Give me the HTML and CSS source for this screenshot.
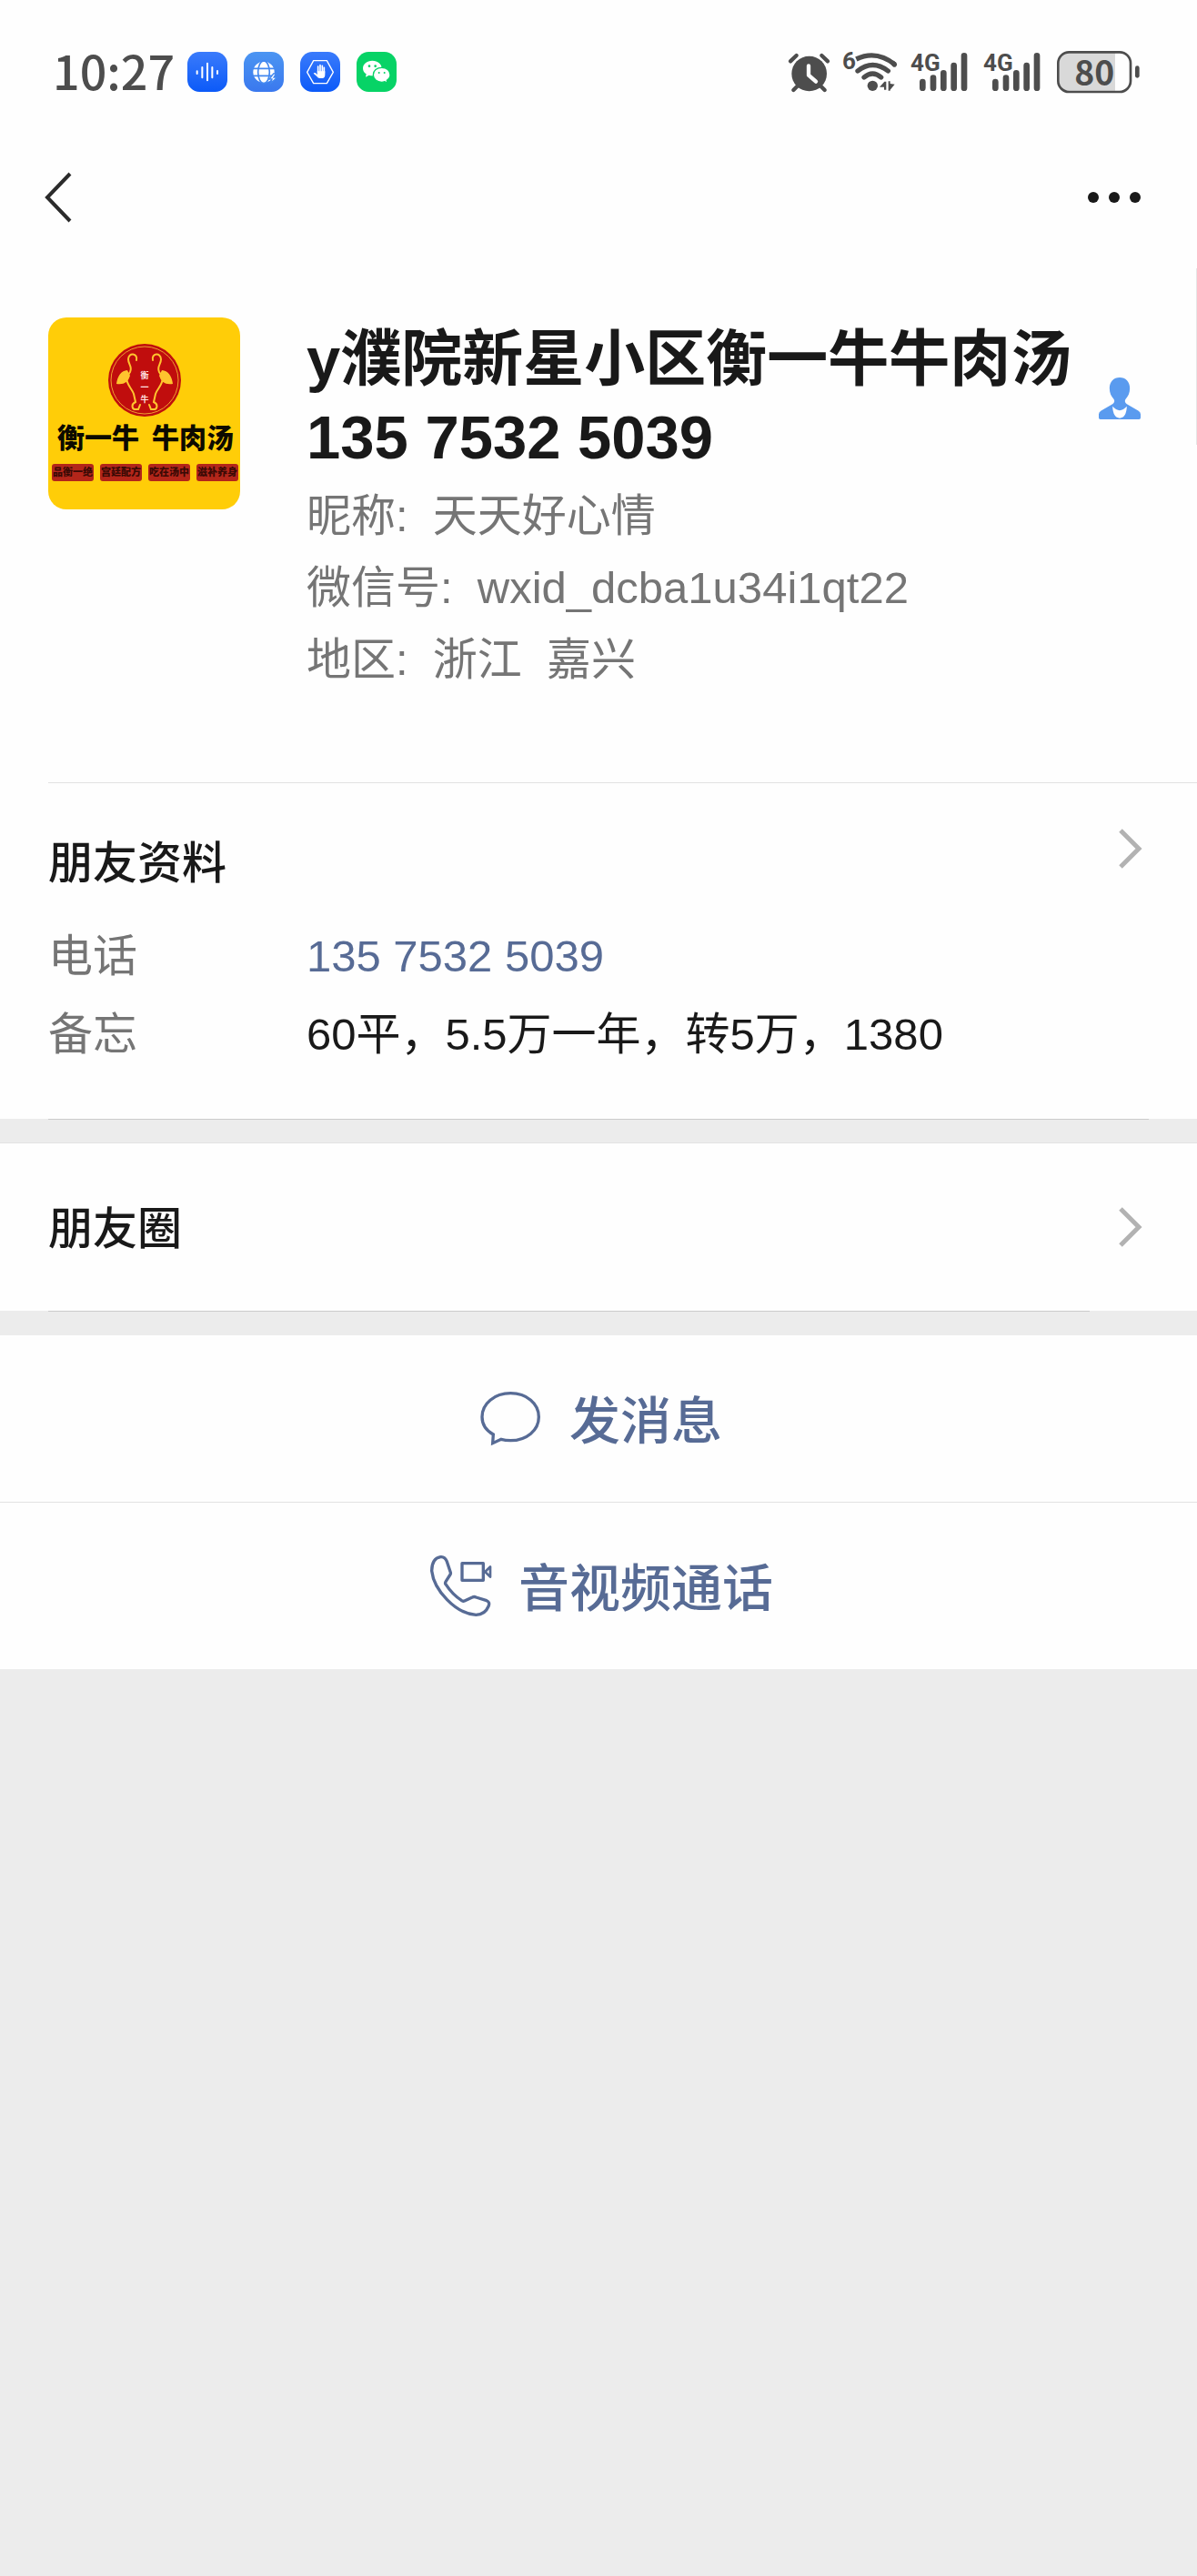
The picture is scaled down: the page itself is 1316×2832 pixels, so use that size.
FILE: index.html
```html
<!DOCTYPE html>
<html lang="zh-CN">
<head>
<meta charset="utf-8">
<meta name="viewport" content="width=device-width, initial-scale=1">
<title>朋友资料</title>
<link rel="stylesheet" href="styles.css">
</head>
<body>
<header class="top">
  <div class="status">
    <time class="clock">10:27</time>
    <div class="apps">
      <svg class="app" viewBox="0 0 132 132" aria-hidden="true">
        <defs><linearGradient id="deep" x1="0" y1="0" x2="0" y2="1"><stop offset="0" stop-color="#3a7bfb"/><stop offset="1" stop-color="#0c5af8"/></linearGradient></defs>
        <rect width="132" height="132" rx="40" fill="url(#deep)"/>
        <path d="M32 64v8M49 51v34M66 38v56M82 51v34M99 63v9" stroke="#fff" stroke-width="6" stroke-linecap="round"/>
      </svg>
      <svg class="app" viewBox="0 0 132 132" aria-hidden="true">
        <defs><linearGradient id="sky" x1="0" y1="0" x2="0" y2="1"><stop offset="0" stop-color="#4b95f2"/><stop offset="1" stop-color="#3a78ee"/></linearGradient></defs>
        <rect width="132" height="132" rx="40" fill="url(#sky)"/>
        <circle cx="66" cy="67" r="35" fill="#fff"/>
        <path d="M30 55h72M30 79h72" stroke="#4287f0" stroke-width="5"/>
        <ellipse cx="66" cy="67" rx="19" ry="37" fill="none" stroke="#4287f0" stroke-width="5"/>
        <path d="M98 72 84 90h9l-3 13 20-19H99l7-12z" fill="#fff" stroke="#4287f0" stroke-width="4"/>
      </svg>
      <svg class="app" viewBox="0 0 132 132" aria-hidden="true">
        <rect width="132" height="132" rx="40" fill="url(#deep)"/>
        <path d="M44 29h44l21 38-21 37H44L23 67z" fill="none" stroke="#fff" stroke-width="4" stroke-linejoin="round"/>
        <path d="M59 70V48M66 68V44M73 68V46M79 70V52" stroke="#fff" stroke-width="5" stroke-linecap="round"/>
        <path d="M56 64h26v12q0 11-9 11h-9q-5 0-9-6L44 71q2-4 7-1l6 5z" fill="#fff"/>
      </svg>
      <svg class="app" viewBox="0 0 132 132" aria-hidden="true">
        <rect width="132" height="132" rx="40" fill="#07d366"/>
        <path d="M52 29c-18 0-31 11-31 25 0 8 4 15 11 19l-2 10 11-6c4 1 8 2 12 2 17 0 30-11 30-25S70 29 52 29z" fill="#fff"/>
        <path d="M83 52c-16 0-28 10-28 24s12 24 28 24c4 0 7-1 10-2l9 5-2-9c7-4 11-11 11-18 0-14-12-24-28-24z" fill="#fff" stroke="#07d366" stroke-width="4"/>
        <g fill="#07d366"><circle cx="42" cy="47" r="4"/><circle cx="62" cy="47" r="4"/><circle cx="74" cy="69" r="3"/><circle cx="92" cy="69" r="3"/></g>
      </svg>
    </div>
    <div class="system">
      <svg width="45" height="48" viewBox="45 42 135 144" aria-label="闹钟">
        <circle cx="119" cy="120" r="58" fill="#4d4d4d"/>
        <path d="M57 79 77 60M180 79 160 60M79 162 67 174M158 162l12 12" stroke="#4d4d4d" stroke-width="13" stroke-linecap="round"/>
        <path d="M117 94v31l24 21" fill="none" stroke="#fff" stroke-width="13" stroke-linecap="round" stroke-linejoin="round"/>
      </svg>
      <svg width="60" height="48" viewBox="228 42 180 144" aria-label="无线网络">
        <text x="228" y="106" class="tag">6</text>
        <g fill="none" stroke="#4d4d4d" stroke-width="16">
          <path d="M274 72Q340 40 402 90" stroke-linecap="butt"/>
          <path d="M396 86l4 4M279 111Q328 72 379 111M300 132Q328 108 356 132" stroke-linecap="round"/>
        </g>
        <circle cx="328" cy="160" r="17" fill="#4d4d4d"/>
        <path d="M351 164l16-18h6v27h-7v-9zM401 155l-15 18v3h-6v-31h6v8z" fill="#4d4d4d"/>
      </svg>
      <svg width="64" height="48" viewBox="456 42 192 144" aria-label="信号">
        <text x="453" y="111" class="tag">4G</text>
        <path d="M493 147v20M528 134v33M562 118v49M596 93v74M630 61v106" stroke="#4d4d4d" stroke-width="20" stroke-linecap="round"/>
      </svg>
      <svg width="64" height="48" viewBox="456 42 192 144" aria-label="信号">
        <text x="453" y="111" class="tag">4G</text>
        <path d="M493 147v20M528 134v33M562 118v49M596 93v74M630 61v106" stroke="#4d4d4d" stroke-width="20" stroke-linecap="round"/>
      </svg>
      <svg width="92" height="48" viewBox="936 42 276 144" aria-label="电量">
        <path d="M974 52h154v124H974q-30 0-30-32V84q0-32 30-32z" fill="#d9d9d9"/>
        <rect x="940" y="49" width="239" height="131" rx="36" fill="none" stroke="#4d4d4d" stroke-width="8"/>
        <path d="M1201 101v26" stroke="#4d4d4d" stroke-width="14" stroke-linecap="round"/>
        <text x="1060" y="158" text-anchor="middle" class="level">80</text>
      </svg>
    </div>
  </div>
  <nav class="nav">
    <button class="icon-button" type="button" aria-label="返回">
      <svg width="30" height="60" viewBox="0 0 30 60"><path d="M29 4 4 30l25 26" fill="none" stroke="#2b2b2b" stroke-width="4"/></svg>
    </button>
    <button class="icon-button" type="button" aria-label="更多">
      <svg width="60" height="14" viewBox="0 0 60 14" fill="#191919"><circle cx="7" cy="7" r="6"/><circle cx="30" cy="7" r="6"/><circle cx="53" cy="7" r="6"/></svg>
    </button>
  </nav>
</header>

<main>
  <section class="profile">
    <svg class="avatar" viewBox="0 0 211 211" role="img" aria-label="衡一牛 牛肉汤">
      <rect width="211" height="211" fill="#ffcd08"/>
      <circle cx="106" cy="69" r="40" fill="#c00d0d"/>
      <circle cx="106" cy="69" r="37" fill="none" stroke="#f0a030" stroke-width="1"/>
      <g fill="none" stroke="#ffc52e" stroke-width="2" stroke-linecap="round">
        <path d="M97 47c2-8-9-9-9-1 0 6 5 8 2 14l-4 6c0 8 6 12 8 18l2 9c-5 2-4 7-1 8h4l2-5"/>
        <path d="M115 47c-2-8 9-9 9-1 0 6-5 8-2 14l4 6c0 8-6 12-8 18l-2 9c5 2 4 7 1 8h-4l-2-5"/>
      </g>
      <path d="M87 58q-10 1-12 15 12 2 15-9zM125 58q10 1 12 15-12 2-15-9z" fill="#ffc52e"/>
      <g class="crest" text-anchor="middle"><text x="106" y="67">衡</text><text x="106" y="80">一</text><text x="106" y="93">牛</text></g>
      <text x="10" y="143" class="sign">衡一牛</text>
      <text x="114" y="143" class="sign">牛肉汤</text>
      <g fill="#b3261a"><rect x="4" y="161" width="46" height="19" rx="3"/><rect x="57" y="161" width="46" height="19" rx="3"/><rect x="110" y="161" width="46" height="19" rx="3"/><rect x="163" y="161" width="46" height="19" rx="3"/></g>
      <g class="slogan" text-anchor="middle"><text x="27" y="174">品衡一绝</text><text x="80" y="174">宫廷配方</text><text x="133" y="174">吃在汤中</text><text x="186" y="174">滋补养身</text></g>
    </svg>
    <div class="identity">
      <div class="name-row">
        <h1 class="name">y濮院新星小区衡一牛牛肉汤 135 7532 5039</h1>
        <svg class="person" width="46" height="46" viewBox="0 0 140 140" aria-hidden="true">
          <path d="M70 0c20 0 34 14 34 36 0 16-6 28-14 36-4 4-3 12 4 17l38 22q8 5 8 12v12q0 5-5 5H5q-5 0-5-5v-12q0-7 8-12l38-22c7-5 8-13 4-17-8-8-14-20-14-36C36 14 50 0 70 0z" fill="#5a9bef"/>
          <path d="M46 97q24 26 48 0-2 39-24 39T46 97z" fill="#fff"/>
        </svg>
      </div>
      <p class="meta">昵称:&nbsp; 天天好心情</p>
      <p class="meta">微信号:&nbsp; wxid_dcba1u34i1qt22</p>
      <p class="meta">地区:&nbsp; 浙江&nbsp; 嘉兴</p>
    </div>
    <span class="edge-handle"></span>
  </section>

  <section class="details">
    <div class="details-head">
      <h2 class="title">朋友资料</h2>
      <button class="icon-button" type="button" aria-label="编辑朋友资料">
        <svg class="chevron" viewBox="0 0 28 44"><path d="m3 2 20 20L3 42" fill="none" stroke="#b2b2b2" stroke-width="5"/></svg>
      </button>
    </div>
    <dl class="fields">
      <dt>电话</dt><dd><a class="phone" href="tel:13575325039">135 7532 5039</a></dd>
      <dt>备忘</dt><dd>60平，5.5万一年，转5万，1380</dd>
    </dl>
  </section>
  <div class="band"></div>

  <button class="moments" type="button">
    <span class="title">朋友圈</span>
    <svg class="chevron" viewBox="0 0 28 44"><path d="m3 2 20 20L3 42" fill="none" stroke="#b2b2b2" stroke-width="5"/></svg>
  </button>
  <div class="band band-short"></div>

  <div class="actions">
    <button class="action" type="button">
      <svg class="action-icon" viewBox="0 0 240 240" aria-hidden="true">
        <path d="M118 35c53 0 93 34 93 78s-40 78-93 78c-11 0-21-1-31-4l-28 13 2-29C38 158 24 137 24 113c0-44 41-78 94-78z" fill="none" stroke="#576b95" stroke-width="10"/>
      </svg>
      <span class="action-label">发消息</span>
    </button>
    <button class="action" type="button">
      <svg class="action-icon" viewBox="0 0 240 240" aria-hidden="true">
        <g fill="none" stroke="#576b95" stroke-width="10" stroke-linejoin="round">
          <path d="M76 38 88 74q1 4-1 7L73 103q-4 6-1 10 22 34 53 54 5 3 9 1l26-12q6-3 12 0l35 11q12 5 6 19-11 27-41 28C105 211 33 132 26 69c0-28 11-43 29-46q14-2 21 15z"/>
          <path d="M126 44h70v56h-70z"/>
          <path d="m202 72 17-17v34z" stroke-width="8"/>
        </g>
      </svg>
      <span class="action-label">音视频通话</span>
    </button>
  </div>
</main>
</body>
</html>
```
FILE: styles.css
```css
* {
  box-sizing: border-box;
}

body {
  margin: 0;
  min-height: 100vh;
  background: #ececec;
  color: #191919;
  font-family: "Noto Sans CJK SC", "Noto Sans", sans-serif;
  font-size: 49px;
}

h1, h2, p, dl, dd {
  margin: 0;
}

button {
  border: 0;
  padding: 0;
  background: none;
  color: inherit;
  font: inherit;
  cursor: pointer;
}

svg {
  display: block;
  flex: none;
  overflow: visible;
}

/* Status bar and navigation */
.top,
.profile,
.details,
.moments,
.action {
  background: #fefefe;
}

.status {
  display: flex;
  align-items: center;
  padding: 55px 62px 54px 58px;
}

.clock {
  padding-bottom: 4px;
  color: #4d4d4d;
  font-size: 52px;
  font-weight: 500;
  line-height: 44px;
}

.apps {
  display: flex;
  gap: 18px;
  margin-left: 14px;
}

.app {
  width: 44px;
  height: 44px;
}

.system {
  display: flex;
  gap: 16px;
  margin-left: auto;
}

.tag,
.level {
  fill: #4d4d4d;
  font-family: Roboto, sans-serif;
  font-weight: 700;
  font-size: 78px;
}

.level {
  font-family: "Noto Sans CJK SC", sans-serif;
  font-size: 112px;
}

.nav {
  display: flex;
  align-items: center;
  justify-content: space-between;
  height: 120px;
  padding: 0 61px 0 48px;
}

.icon-button {
  display: block;
}

/* Profile */
.profile {
  position: relative;
  display: flex;
  align-items: flex-start;
  gap: 73px;
  padding: 72px 62px 96px 53px;
}

.profile::after {
  content: "";
  position: absolute;
  left: 53px;
  right: 0;
  bottom: 0;
  height: 1px;
  background: #e2e2e2;
}

.edge-handle {
  position: absolute;
  top: 18px;
  right: 0;
  width: 1px;
  height: 194px;
  background: #e6e6e6;
}

.avatar {
  width: 211px;
  height: 211px;
  border-radius: 20px;
  overflow: hidden;
}

.crest {
  fill: #ffe3e3;
  font-size: 9px;
  font-weight: 700;
}

.sign {
  fill: #0d0a00;
  font-size: 30px;
  font-weight: 900;
}

.slogan {
  fill: #3a0a05;
  font-size: 11px;
  font-weight: 900;
}

.identity {
  flex: 1;
  min-width: 0;
  padding-top: 3px;
}

.name-row {
  display: flex;
  align-items: center;
  justify-content: space-between;
  margin-bottom: 4px;
}

.name,
.meta,
.fields {
  font-family: "Liberation Sans", "Noto Sans CJK SC", sans-serif;
}

.name {
  font-size: 67px;
  font-weight: 700;
  line-height: 86px;
}

.meta {
  color: #757575;
  line-height: 79px;
}

/* Friend details */
.details {
  padding: 50px 59px 50px 53px;
}

.details-head {
  display: flex;
  align-items: flex-start;
  justify-content: space-between;
  margin-bottom: 25px;
}

.title {
  padding-bottom: 4px;
  font-size: 49px;
  font-weight: 500;
  line-height: 68px;
}

.chevron {
  width: 28px;
  height: 44px;
}

.fields {
  display: grid;
  grid-template-columns: 284px 1fr;
  line-height: 86px;
}

.fields dt {
  color: #757575;
}

.phone {
  color: #576b95;
  text-decoration: none;
}

.band {
  height: 27px;
  border-bottom: 1px solid #e2e2e2;
}

.band::before {
  content: "";
  display: block;
  height: 1px;
  margin: 0 53px;
  background: #cccccc;
}

.band-short {
  border-bottom: 0;
}

.band-short::before {
  margin-right: 118px;
}

.moments {
  display: flex;
  align-items: center;
  justify-content: space-between;
  width: 100%;
  padding: 56px 59px 56px 53px;
}

/* Actions */
.actions {
  display: grid;
  gap: 1px;
  background: #e2e2e2;
}

.action {
  display: flex;
  align-items: center;
  justify-content: center;
  gap: 24px;
  padding: 50px 0;
  color: #576b95;
  font-size: 56px;
  font-weight: 500;
}

.action-label {
  padding-bottom: 4px;
  line-height: 79px;
}

.action-icon {
  width: 80px;
  height: 80px;
}
```
